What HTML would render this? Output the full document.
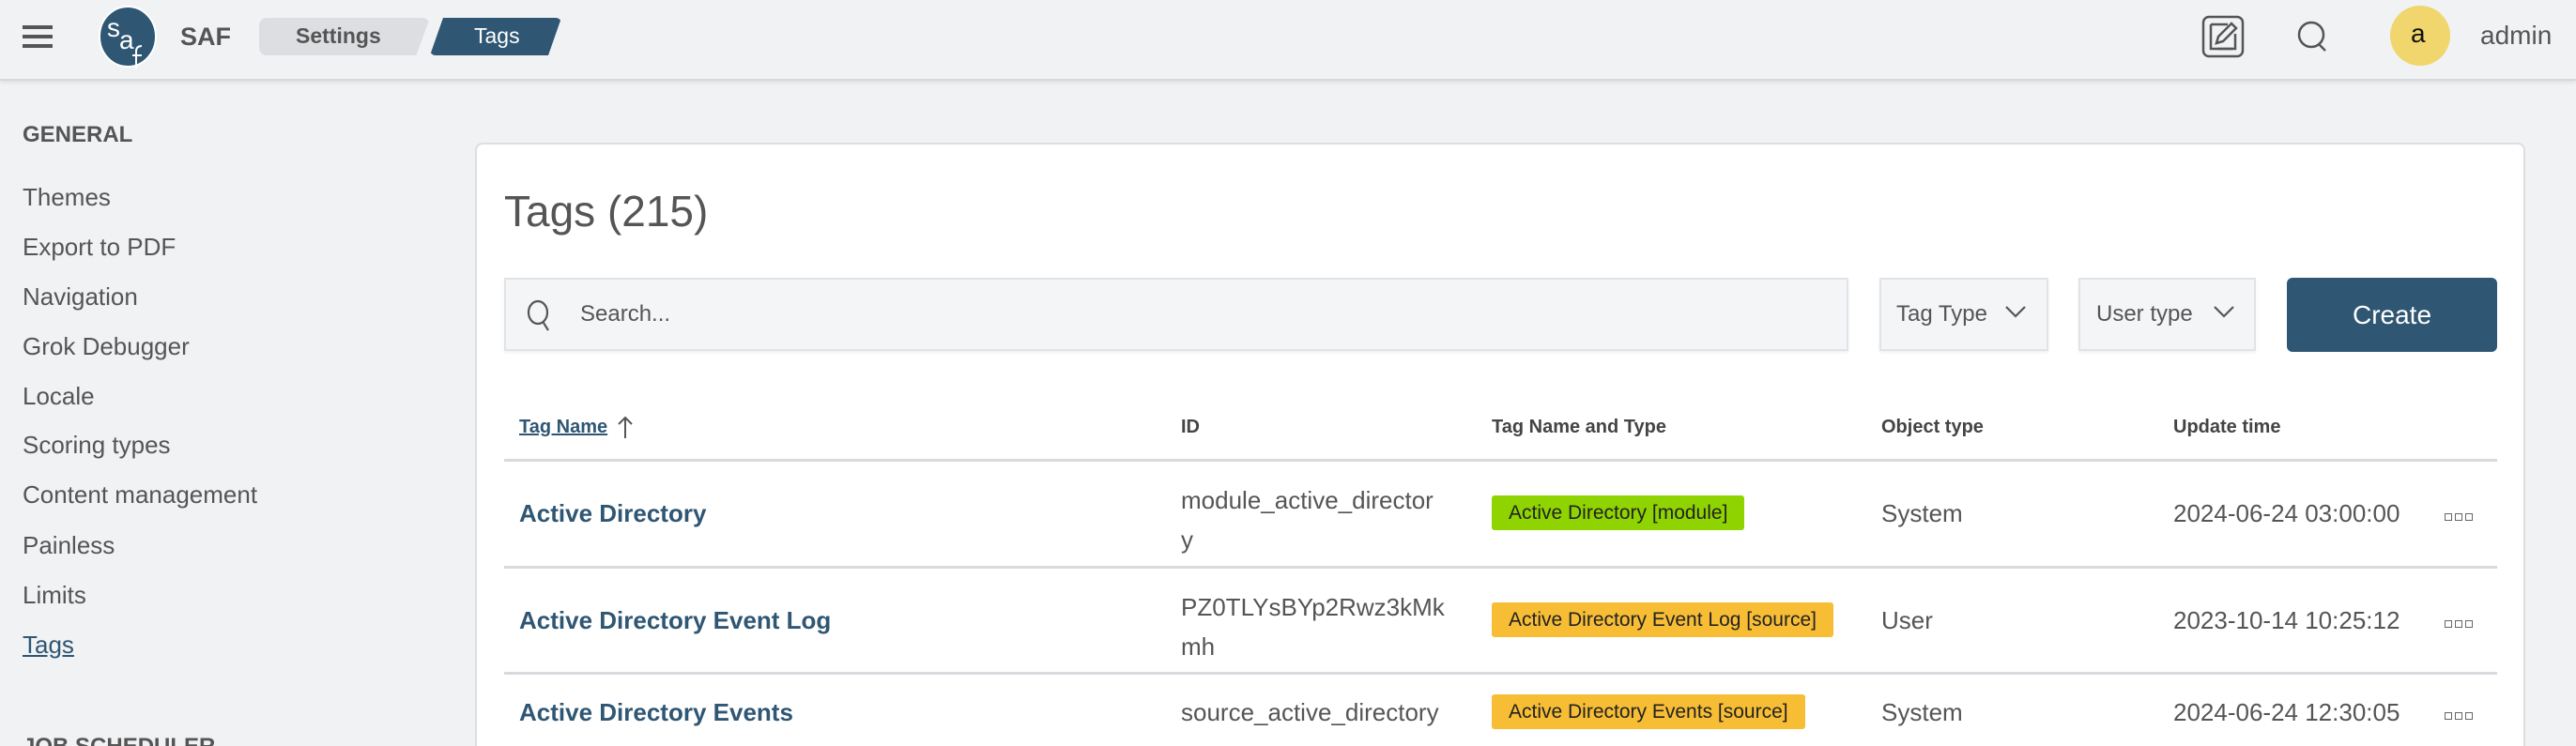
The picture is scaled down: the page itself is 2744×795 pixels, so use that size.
<!DOCTYPE html>
<html style="width:2744px;height:795px;overflow:hidden"><head><meta charset="utf-8"><style>
*{margin:0;padding:0;box-sizing:border-box}
body{width:2744px;height:795px;overflow:hidden;background:#f1f2f4;font-family:"Liberation Sans",sans-serif;color:#555;position:relative}
.a{position:absolute;white-space:nowrap}
.hdr{position:absolute;left:0;top:0;width:2744px;height:86px;background:#f1f2f4;border-bottom:2px solid #d6d8dc;box-shadow:0 2px 4px rgba(0,0,0,.08)}
.side{font-size:26px;color:#555;left:24px}
.card{position:absolute;left:506px;top:152px;width:2184px;height:660px;background:#fff;border:2px solid #dcdee2;border-radius:8px}
.th{font-size:20px;font-weight:bold;color:#444;top:444px}
.line{position:absolute;left:537px;width:2123px;height:3px;background:#d8dade}
.tn{font-size:26px;font-weight:bold;color:#2f5673;left:553px}
.td{font-size:26px;color:#555}
.badge{position:absolute;height:37px;line-height:37px;font-size:21px;color:#222;padding:0 18px;border-radius:3px;white-space:nowrap}
.dots{position:absolute;width:8px;height:8px;border:1.5px solid #666;box-shadow:11px 0 0 -0px #fff}
.dt{position:absolute}
.dt i{display:inline-block;width:8px;height:8px;border:1.5px solid #666;margin-right:3px}
.box{position:absolute;background:#f4f5f6;border:2px solid #e1e3e6;box-shadow:0 2px 3px rgba(0,0,0,.06)}
</style></head><body>
<div class="hdr"></div>
<div class="a" style="left:24px;top:27px;width:32px;height:4px;background:#555;box-shadow:0 10px 0 #555,0 20px 0 #555"></div>
<svg class="a" style="left:103px;top:5px" width="66" height="70" viewBox="0 0 66 70"><ellipse cx="33" cy="34" rx="30" ry="32" fill="#2f5673" stroke="#fff" stroke-width="2"/><text x="11" y="34" font-family="Liberation Sans" font-size="28" fill="#fff">s</text><text x="24" y="47" font-family="Liberation Sans" font-size="28" fill="#fff">a</text><path d="M42 68V50q0-6 6-6M38 54h10" stroke="#fff" stroke-width="2" fill="none"/></svg>
<div class="a" style="left:192px;top:24px;font-size:27px;font-weight:bold;color:#555">SAF</div>
<div class="a" style="left:276px;top:19px;width:182px;height:40px;background:#dcdee2;border-radius:8px;clip-path:polygon(0 0,100% 0,92% 100%,0 100%)"></div>
<div class="a" style="left:315px;top:25px;font-size:23px;font-weight:bold;color:#555">Settings</div>
<div class="a" style="left:458px;top:19px;width:140px;height:40px;background:#2f5673;border-radius:6px;clip-path:polygon(10% 0,100% 0,90% 100%,0 100%)"></div>
<div class="a" style="left:505px;top:25px;font-size:23px;color:#fff">Tags</div>
<svg class="a" style="left:2345px;top:16px" width="46" height="46" viewBox="0 0 46 46" fill="none" stroke="#555" stroke-width="2.5"><rect x="2" y="2" width="42" height="42" rx="6"/><path d="M10 10h18M10 10v26h26V20"/><path d="M16 30l2-7 14-14 5 5-14 14z"/><path d="M17 36h16"/></svg>
<svg class="a" style="left:2446px;top:22px" width="36" height="36" viewBox="0 0 36 36" fill="none" stroke="#555" stroke-width="2.5"><circle cx="16" cy="15" r="13"/><path d="M24 25l7 7"/></svg>
<div class="a" style="left:2546px;top:6px;width:64px;height:64px;border-radius:50%;background:#f0d66c"></div>
<div class="a" style="left:2568px;top:20px;font-size:28px;color:#111">a</div>
<div class="a" style="left:2642px;top:22px;font-size:28px;color:#555">admin</div>

<div class="a" style="left:24px;top:130px;font-size:24px;font-weight:bold;color:#555">GENERAL</div>
<div class="a side" style="top:195px">Themes</div>
<div class="a side" style="top:248px">Export to PDF</div>
<div class="a side" style="top:301px">Navigation</div>
<div class="a side" style="top:354px">Grok Debugger</div>
<div class="a side" style="top:407px">Locale</div>
<div class="a side" style="top:459px">Scoring types</div>
<div class="a side" style="top:512px">Content management</div>
<div class="a side" style="top:566px">Painless</div>
<div class="a side" style="top:619px">Limits</div>
<div class="a side" style="top:672px;text-decoration:underline;color:#2f5673">Tags</div>
<div class="a" style="left:24px;top:782px;font-size:24px;font-weight:bold;color:#555">JOB SCHEDULER</div>

<div class="card"></div>
<div class="a" style="left:537px;top:198px;font-size:46px;color:#555">Tags (215)</div>
<div class="box" style="left:537px;top:296px;width:1432px;height:78px"></div>
<svg class="a" style="left:560px;top:318px" width="32" height="36" viewBox="0 0 32 36" fill="none" stroke="#555" stroke-width="2.2"><ellipse cx="13" cy="15" rx="10" ry="12"/><path d="M19 26l5 8"/></svg>
<div class="a" style="left:618px;top:321px;font-size:24px;color:#555">Search...</div>
<div class="box" style="left:2002px;top:296px;width:180px;height:78px"></div>
<div class="a" style="left:2020px;top:321px;font-size:24px;color:#555">Tag Type</div>
<svg class="a" style="left:2135px;top:324px" width="24" height="16" viewBox="0 0 24 16" fill="none" stroke="#555" stroke-width="2.2"><path d="M2 3l10 10 10-10"/></svg>
<div class="box" style="left:2214px;top:296px;width:189px;height:78px"></div>
<div class="a" style="left:2233px;top:321px;font-size:24px;color:#555">User type</div>
<svg class="a" style="left:2357px;top:324px" width="24" height="16" viewBox="0 0 24 16" fill="none" stroke="#555" stroke-width="2.2"><path d="M2 3l10 10 10-10"/></svg>
<div class="a" style="left:2436px;top:296px;width:224px;height:79px;background:#2f5673;border-radius:6px;color:#fff;font-size:28px;text-align:center;line-height:79px">Create</div>

<div class="a th" style="left:553px;color:#2f5673;text-decoration:underline">Tag Name</div>
<svg class="a" style="left:657px;top:442px" width="18" height="26" viewBox="0 0 18 26" fill="none" stroke="#555" stroke-width="2"><path d="M9 25V3M2 10l7-7 7 7"/></svg>
<div class="a th" style="left:1258px">ID</div>
<div class="a th" style="left:1589px">Tag Name and Type</div>
<div class="a th" style="left:2004px">Object type</div>
<div class="a th" style="left:2315px">Update time</div>
<div class="line" style="top:489px"></div>

<div class="a tn" style="top:532px">Active Directory</div>
<div class="a td" style="left:1258px;top:512px;line-height:42px">module_active_director<br>y</div>
<div class="badge" style="left:1589px;top:528px;background:#8fd400">Active Directory [module]</div>
<div class="a td" style="left:2004px;top:532px">System</div>
<div class="a td" style="left:2315px;top:532px">2024-06-24 03:00:00</div>
<div class="dt" style="left:2604px;top:542px"><i></i><i></i><i></i></div>
<div class="line" style="top:603px"></div>

<div class="a tn" style="top:646px">Active Directory Event Log</div>
<div class="a td" style="left:1258px;top:626px;line-height:42px">PZ0TLYsBYp2Rwz3kMk<br>mh</div>
<div class="badge" style="left:1589px;top:642px;background:#f7bd35">Active Directory Event Log [source]</div>
<div class="a td" style="left:2004px;top:646px">User</div>
<div class="a td" style="left:2315px;top:646px">2023-10-14 10:25:12</div>
<div class="dt" style="left:2604px;top:656px"><i></i><i></i><i></i></div>
<div class="line" style="top:716px"></div>

<div class="a tn" style="top:744px">Active Directory Events</div>
<div class="a td" style="left:1258px;top:744px">source_active_directory</div>
<div class="badge" style="left:1589px;top:740px;background:#f7bd35">Active Directory Events [source]</div>
<div class="a td" style="left:2004px;top:744px">System</div>
<div class="a td" style="left:2315px;top:744px">2024-06-24 12:30:05</div>
<div class="dt" style="left:2604px;top:754px"><i></i><i></i><i></i></div>
</body></html>
